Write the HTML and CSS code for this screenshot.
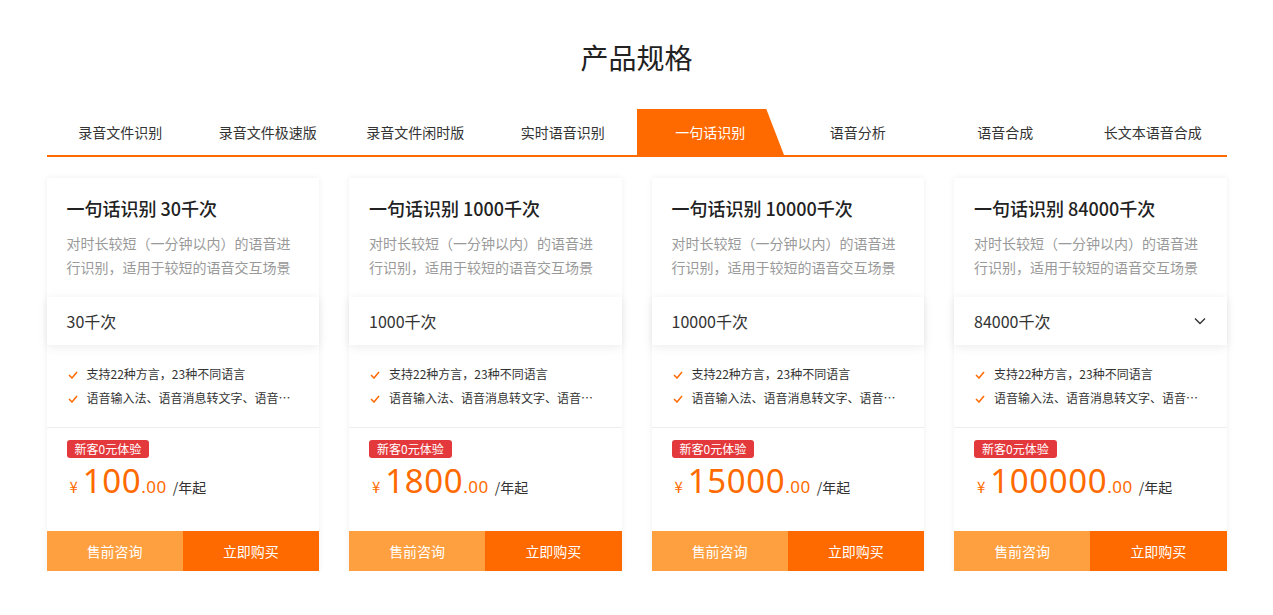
FILE: index.html
```html
<!DOCTYPE html>
<html lang="zh-CN">
<head>
    <meta charset="UTF-8">
    <meta name="viewport" content="width=device-width, initial-scale=1.0">
    <title>产品规格</title>
    <link rel="stylesheet" href="styles.css">
</head>
<body>
    <div class="spec-section">
        <h2 class="spec-title">产品规格</h2>

        <div class="tabs">
            <div class="tab">录音文件识别</div>
            <div class="tab">录音文件极速版</div>
            <div class="tab">录音文件闲时版</div>
            <div class="tab">实时语音识别</div>
            <div class="tab active">一句话识别</div>
            <div class="tab">语音分析</div>
            <div class="tab">语音合成</div>
            <div class="tab">长文本语音合成</div>
        </div>

        <div class="cards">
            <div class="card">
                <div class="card-head">
                    <h3>一句话识别 30千次</h3>
                    <p>对时长较短（一分钟以内）的语音进行识别，适用于较短的语音交互场景</p>
                </div>
                <div class="select">30千次</div>
                <ul class="features">
                    <li>支持22种方言，23种不同语言</li>
                    <li>语音输入法、语音消息转文字、语音搜索等</li>
                </ul>
                <div class="price-box">
                    <span class="badge">新客0元体验</span>
                    <div class="price"><span class="yen">¥</span><span class="num">100</span><span class="dec">.00</span><span class="unit">/年起</span></div>
                </div>
                <div class="actions">
                    <button class="consult">售前咨询</button>
                    <button class="buy">立即购买</button>
                </div>
            </div>

            <div class="card">
                <div class="card-head">
                    <h3>一句话识别 1000千次</h3>
                    <p>对时长较短（一分钟以内）的语音进行识别，适用于较短的语音交互场景</p>
                </div>
                <div class="select">1000千次</div>
                <ul class="features">
                    <li>支持22种方言，23种不同语言</li>
                    <li>语音输入法、语音消息转文字、语音搜索等</li>
                </ul>
                <div class="price-box">
                    <span class="badge">新客0元体验</span>
                    <div class="price"><span class="yen">¥</span><span class="num">1800</span><span class="dec">.00</span><span class="unit">/年起</span></div>
                </div>
                <div class="actions">
                    <button class="consult">售前咨询</button>
                    <button class="buy">立即购买</button>
                </div>
            </div>

            <div class="card">
                <div class="card-head">
                    <h3>一句话识别 10000千次</h3>
                    <p>对时长较短（一分钟以内）的语音进行识别，适用于较短的语音交互场景</p>
                </div>
                <div class="select">10000千次</div>
                <ul class="features">
                    <li>支持22种方言，23种不同语言</li>
                    <li>语音输入法、语音消息转文字、语音搜索等</li>
                </ul>
                <div class="price-box">
                    <span class="badge">新客0元体验</span>
                    <div class="price"><span class="yen">¥</span><span class="num">15000</span><span class="dec">.00</span><span class="unit">/年起</span></div>
                </div>
                <div class="actions">
                    <button class="consult">售前咨询</button>
                    <button class="buy">立即购买</button>
                </div>
            </div>

            <div class="card">
                <div class="card-head">
                    <h3>一句话识别 84000千次</h3>
                    <p>对时长较短（一分钟以内）的语音进行识别，适用于较短的语音交互场景</p>
                </div>
                <div class="select">
                    <span>84000千次</span>
                    <svg class="chevron" width="14" height="14" viewBox="0 0 14 14"><path d="M2 4.5 L7 9.5 L12 4.5" fill="none" stroke="#333" stroke-width="1.4"/></svg>
                </div>
                <ul class="features">
                    <li>支持22种方言，23种不同语言</li>
                    <li>语音输入法、语音消息转文字、语音搜索等</li>
                </ul>
                <div class="price-box">
                    <span class="badge">新客0元体验</span>
                    <div class="price"><span class="yen">¥</span><span class="num">100000</span><span class="dec">.00</span><span class="unit">/年起</span></div>
                </div>
                <div class="actions">
                    <button class="consult">售前咨询</button>
                    <button class="buy">立即购买</button>
                </div>
            </div>
        </div>
    </div>
</body>
</html>
```

FILE: styles.css
```css
body {
    margin: 0;
    background-color: #fff;
    font-family: "Noto Sans CJK SC", "Noto Sans", sans-serif;
    color: #333;
}
.spec-section {
    width: 1180px;
    margin: 0 auto;
    padding-top: 36px;
}
.spec-title {
    margin: 0;
    text-align: center;
    font-size: 28px;
    font-weight: normal;
    line-height: 42px;
    color: #222;
}
.tabs {
    display: flex;
    margin-top: 31px;
    border-bottom: 2px solid #ff6a00;
}
.tab {
    flex: 1;
    height: 46px;
    line-height: 46px;
    text-align: center;
    font-size: 14px;
    color: #333;
    cursor: pointer;
}
.tab.active {
    background-color: #ff6a00;
    color: #fff;
    clip-path: polygon(0 0, 88% 0, 100% 100%, 0 100%);
}
.cards {
    display: flex;
    gap: 30px;
    margin-top: 21px;
}
.card {
    flex: 1;
    min-width: 0;
    height: 393px;
    display: flex;
    flex-direction: column;
    background-color: #fff;
    box-shadow: 0 0 6px rgba(0,0,0,0.07);
}
.card-head {
    padding: 18px 20px 18px;
}
.card-head h3 {
    margin: 0;
    font-size: 18px;
    font-weight: 500;
    line-height: 24px;
    color: #222;
}
.card-head p {
    margin: 11px 0 0;
    font-size: 14px;
    line-height: 24px;
    color: #999;
}
.select {
    height: 48px;
    display: flex;
    align-items: center;
    justify-content: space-between;
    padding: 0 20px;
    font-size: 16px;
    color: #333;
    box-shadow: 0 2px 10px rgba(0,0,0,0.08);
}
.features {
    list-style: none;
    margin: 0;
    padding: 17px 28px 17px 20px;
    border-bottom: 1px solid #eee;
}
.features li {
    padding-left: 20px;
    font-size: 12px;
    line-height: 24px;
    color: #333;
    white-space: nowrap;
    overflow: hidden;
    text-overflow: ellipsis;
    background-image: url("data:image/svg+xml;utf8,<svg xmlns='http://www.w3.org/2000/svg' width='10' height='8' viewBox='0 0 10 8'><path d='M1 4 L4 7 L9 1' fill='none' stroke='%23ff6a00' stroke-width='1.5'/></svg>");
    background-repeat: no-repeat;
    background-position: 1px 9px;
}
.price-box {
    display: flex;
    flex-direction: column;
    align-items: flex-start;
    padding: 12px 20px 0;
}
.badge {
    height: 18px;
    line-height: 18px;
    padding: 0 8px;
    border-radius: 3px;
    background-color: #e4393c;
    color: #fff;
    font-size: 12px;
}
.price {
    display: flex;
    align-items: baseline;
    margin-top: 0;
    color: #ff6a00;
}
.price .yen {
    font-size: 15px;
    margin: 0 5px 0 3px;
}
.price .num {
    font-size: 33px;
    line-height: 46px;
    letter-spacing: 0.6px;
    font-family: "Noto Sans", sans-serif;
}
.price .dec {
    font-size: 17px;
    letter-spacing: 0.5px;
    font-family: "Noto Sans", sans-serif;
}
.price .unit {
    font-size: 14px;
    color: #333;
    margin-left: 6px;
}
.actions {
    margin-top: auto;
    display: flex;
}
.actions button {
    flex: 1;
    height: 40px;
    border: none;
    color: #fff;
    font-size: 14px;
    font-family: inherit;
    cursor: pointer;
}
.actions .consult {
    background-color: #ffa040;
}
.actions .buy {
    background-color: #ff6a00;
}
```
